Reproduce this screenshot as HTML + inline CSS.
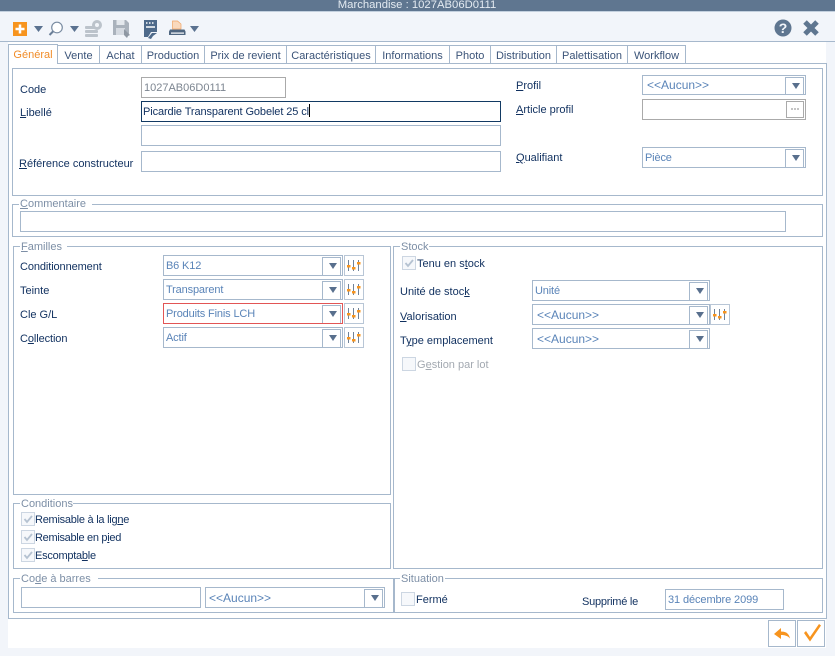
<!DOCTYPE html>
<html lang="fr"><head><meta charset="utf-8"><title>Marchandise</title>
<style>
*{box-sizing:border-box}
html,body{margin:0;padding:0;width:835px;height:656px;overflow:hidden;background:#f2f5fa;font-family:"Liberation Sans",sans-serif;font-size:11px;color:#10305f}
.a,.l,.i,.c,.b,.g,.t,.k,.lg,.sb{position:absolute}
.l{white-space:nowrap;line-height:14px;height:14px;margin-top:1px}
.i,.c{border:1px solid #a6b8cc;background:#fff;height:21px;color:#5a84b8;line-height:20px;padding-left:2px;white-space:nowrap;overflow:hidden;font-size:11px;letter-spacing:-.15px}
.c{line-height:21px}
.c.n{font-size:12px;letter-spacing:0;padding-left:4px;line-height:20px}
.c:after{content:"";position:absolute;right:1px;top:1px;width:17px;height:17px;border:1px solid #a6b8cc;background:#fff}
.c:before{content:"";position:absolute;z-index:1;right:5px;top:7px;border-left:4.500px solid transparent;border-right:4.500px solid transparent;border-top:6px solid #586f8d}
.g{border:1px solid #a6b8cc}
.lg{background:#fff;color:#7d8fa6;line-height:12px;height:13px;padding:0 0 0 1px;white-space:nowrap;margin-top:1px}
.t{top:45px;height:19px;border:1px solid #a6b8cc;border-left:0;background:#fff;text-align:center;line-height:20px;color:#3a5378;white-space:nowrap;font-size:11px}
.k{width:14px;height:14px;border:1px solid #ccd6e2;background:#f6f8fb}
.sb{width:20px;height:21px;border:1px solid #b8c6d6;background:#fff}
u{text-underline-offset:1px}
</style></head><body>
<div class="a" style="left:0;top:0;width:835px;height:11px;background:#5f7690;color:#e4ebf2;text-align:center;line-height:10px;font-size:11.300px;padding-right:1px">Marchandise : 1027AB06D0111</div>
<div class="a" style="left:0;top:11px;width:835px;height:1px;background:#c3d0de"></div>
<div class="a" style="left:0;top:41px;width:835px;height:1px;background:#a6b8cc"></div>
<div class="a" style="left:8px;top:42px;width:818px;height:606px;background:#fff"></div>

<!-- toolbar icons -->
<svg class="a" style="left:0;top:12px" width="835" height="29" viewBox="0 12 835 29">
<rect x="13" y="22" width="14" height="14" fill="#f7941e"/><path d="M20 24.500v9M15.500 29h9" stroke="#fff" stroke-width="2.500"/>
<path d="M34 26h9l-4.500 6z" fill="#5b7290"/>
<circle cx="57" cy="27.500" r="5.300" fill="#fff" stroke="#7a8ca2" stroke-width="1.200"/><path d="M53 31.500l-3.500 3.500" stroke="#6b7f98" stroke-width="2"/>
<path d="M70 26h9l-4.500 6z" fill="#5b7290"/>
<g fill="#bcc3cb"><rect x="85" y="26" width="13" height="3" rx="1"/><rect x="85" y="30" width="13" height="3" rx="1"/><rect x="85" y="34" width="13" height="3" rx="1"/><circle cx="97" cy="25" r="5"/></g><circle cx="97" cy="25" r="2" fill="#f2f5fa"/>
<path d="M113 20h13l3 3v12h-16z" fill="#aab2bc"/><rect x="116.500" y="20" width="8" height="5" fill="#e4e8ed"/><rect x="116" y="28" width="9" height="7" fill="#d5dae1"/><path d="M124 29l6 6-2 1-1 2-3-3z" fill="#8f98a3"/>
<path d="M144 20h13v12h-6l-3 5h-4z" fill="#4f6a8a"/><path d="M146 23h1.500M149 23h1.500M152 23h1.500M146 27h9" stroke="#fff" stroke-width="1.400"/><path d="M148 38l4-5h5l-4 3-2 3z" fill="#4f6a8a"/>
<path d="M172.500 21h5l3.500 3v5h-8.500z" fill="#f9d9bd" stroke="#f0a464" stroke-width=".7"/><path d="M170 29.500h14.500l1 2v3.500h-16.500v-3.500z" fill="#4f6680"/><rect x="171" y="32.500" width="13" height="1.200" fill="#fff"/>
<path d="M190 26h9l-4.500 6z" fill="#5b7290"/>
<circle cx="783" cy="28" r="8.500" fill="#5f7690"/><text x="783" y="33" text-anchor="middle" font-family="Liberation Sans" font-size="14" font-weight="700" fill="#f2f5fa">?</text>
<path d="M805 22l12 12M817 22l-12 12" stroke="#5f7690" stroke-width="5"/>
</svg>

<!-- tabs -->
<div class="t" style="left:8px;top:44px;width:50px;height:20px;border:1px solid #a6b8cc;border-bottom:0;color:#f08c28;z-index:3">Général</div>
<div class="t" style="left:58px;width:42px">Vente</div>
<div class="t" style="left:100px;width:42px">Achat</div>
<div class="t" style="left:142px;width:63px">Production</div>
<div class="t" style="left:205px;width:82px">Prix de revient</div>
<div class="t" style="left:287px;width:89px">Caractéristiques</div>
<div class="t" style="left:376px;width:74px">Informations</div>
<div class="t" style="left:450px;width:41px">Photo</div>
<div class="t" style="left:491px;width:66px">Distribution</div>
<div class="t" style="left:557px;width:71px">Palettisation</div>
<div class="t" style="left:628px;width:58px">Workflow</div>

<div class="g" style="left:8px;top:63px;width:819px;height:556px"></div>
<div class="a" style="left:9px;top:63px;width:48px;height:1px;background:#fff;z-index:4"></div>
<div class="g" style="left:12px;top:68px;width:811px;height:128px"></div>

<!-- top -->
<div class="l" style="left:20px;top:82px">Code</div>
<div class="i" style="left:141px;top:77px;width:145px;border-color:#aaa;color:#7c8590;letter-spacing:0">1027AB06D0111</div>
<div class="l" style="left:20px;top:105px"><u>L</u>ibellé</div>
<div class="i" style="left:141px;top:101px;width:360px;border-color:#123a63;color:#10305f;padding-left:1px;letter-spacing:-.1px;line-height:21px">Picardie Transparent Gobelet 25 cl<span style="display:inline-block;width:1px;height:13px;background:#000;vertical-align:-2px"></span></div>
<div class="i" style="left:141px;top:125px;width:360px"></div>
<div class="l" style="left:19px;top:156px"><u>R</u>éférence constructeur</div>
<div class="i" style="left:141px;top:151px;width:360px"></div>
<div class="l" style="left:516px;top:78px"><u>P</u>rofil</div>
<div class="c n" style="left:642px;top:75px;width:164px;height:20px;line-height:19px">&lt;&lt;Aucun&gt;&gt;</div>
<div class="l" style="left:516px;top:102px"><u>A</u>rticle profil</div>
<div class="i" style="left:642px;top:99px;width:164px;border-color:#aaa"></div>
<div class="a" style="left:786px;top:101px;width:18px;height:17px;border:1px solid #aaa;background:#fff"></div>
<div class="a" style="left:791px;top:108px;width:8px;height:2px;border-top:2px dotted #c4c4c4"></div>
<div class="l" style="left:516px;top:150px"><u>Q</u>ualifiant</div>
<div class="c" style="left:642px;top:147px;width:164px">Pièce</div>

<!-- commentaire -->
<div class="g" style="left:12px;top:204px;width:811px;height:33px"></div>
<div class="lg" style="left:19px;top:197px;width:73px"><u>C</u>ommentaire</div>
<div class="i" style="left:20px;top:211px;width:766px;z-index:1"></div>

<!-- familles -->
<div class="g" style="left:13px;top:246px;width:378px;height:249px"></div>
<div class="lg" style="left:20px;top:240px;width:47px"><u>F</u>amilles</div>
<div class="l" style="left:20px;top:259px;letter-spacing:-.1px">Conditionnement</div>
<div class="c" style="left:163px;top:255px;width:180px">B6 K12</div>
<div class="sb" style="left:344px;top:255px"></div>
<div class="l" style="left:20px;top:283px">Teinte</div>
<div class="c" style="left:163px;top:279px;width:180px">Transparent</div>
<div class="sb" style="left:344px;top:279px"></div>
<div class="l" style="left:20px;top:307px">Cle G/L</div>
<div class="c" style="left:163px;top:303px;width:180px;border-color:#e25555">Produits Finis LCH</div>
<div class="sb" style="left:344px;top:303px"></div>
<div class="l" style="left:20px;top:331px;letter-spacing:-.1px">C<u>o</u>llection</div>
<div class="c" style="left:163px;top:327px;width:180px">Actif</div>
<div class="sb" style="left:344px;top:327px"></div>

<!-- stock -->
<div class="g" style="left:393px;top:246px;width:430px;height:323px"></div>
<div class="lg" style="left:400px;top:240px;width:29px">Stock</div>
<div class="k" style="left:402px;top:256px"></div>
<div class="l" style="left:417px;top:256px">Tenu en s<u>t</u>ock</div>
<div class="l" style="left:400px;top:284px">Unité de stoc<u>k</u></div>
<div class="c" style="left:532px;top:280px;width:178px">Unité</div>
<div class="l" style="left:400px;top:309px"><u>V</u>alorisation</div>
<div class="c n" style="left:532px;top:304px;width:178px">&lt;&lt;Aucun&gt;&gt;</div>
<div class="sb" style="left:710px;top:304px"></div>
<div class="l" style="left:400px;top:333px">T<u>y</u>pe emplacement</div>
<div class="c n" style="left:532px;top:328px;width:178px">&lt;&lt;Aucun&gt;&gt;</div>
<div class="k" style="left:402px;top:357px"></div>
<div class="l" style="left:417px;top:357px;color:#a3a9b1">G<u>e</u>stion par lot</div>

<!-- conditions -->
<div class="g" style="left:13px;top:503px;width:378px;height:66px"></div>
<div class="lg" style="left:20px;top:497px;width:53px">Conditions</div>
<div class="k" style="left:21px;top:512px"></div>
<div class="l" style="left:35px;top:512px;letter-spacing:-.25px">Remisable à la lig<u>n</u>e</div>
<div class="k" style="left:21px;top:530px"></div>
<div class="l" style="left:35px;top:530px;letter-spacing:-.3px">Remisable en p<u>i</u>ed</div>
<div class="k" style="left:21px;top:548px"></div>
<div class="l" style="left:35px;top:548px;letter-spacing:-.25px">Escompta<u>b</u>le</div>

<!-- code barres -->
<div class="g" style="left:13px;top:578px;width:381px;height:35px"></div>
<div class="lg" style="left:20px;top:572px;width:78px">Co<u>d</u>e à barres</div>
<div class="i" style="left:21px;top:587px;width:180px"></div>
<div class="c n" style="left:205px;top:587px;width:180px;padding-left:3px">&lt;&lt;Aucun&gt;&gt;</div>

<!-- situation -->
<div class="g" style="left:393px;top:578px;width:430px;height:35px;border-left-width:2px"></div>
<div class="lg" style="left:400px;top:572px;width:45px">Situation</div>
<div class="k" style="left:401px;top:592px"></div>
<div class="l" style="left:416px;top:592px">Fermé</div>
<div class="l" style="left:582px;top:594px;letter-spacing:-.25px">Supprimé le</div>
<div class="i" style="left:665px;top:589px;width:119px;letter-spacing:-.1px">31 décembre 2099</div>

<!-- bottom buttons -->
<div class="g" style="left:768px;top:620px;width:28px;height:27px;background:#fff"></div>
<div class="g" style="left:797px;top:620px;width:28px;height:27px;background:#fff"></div>

<svg class="a" style="left:0;top:0;z-index:5" width="835" height="656" viewBox="0 0 835 656">
<defs><g id="s"><path d="M.5 0v11M5.500 0v11M10.500 0v11" stroke="#6f8299" stroke-width="1"/><rect x="-1" y="5" width="3.500" height="2.500" fill="#f7941e"/><rect x="4" y="7" width="3.500" height="2.500" fill="#f7941e"/><rect x="9" y="2" width="3.500" height="2.500" fill="#f7941e"/></g>
<path id="ck" d="M3.500 7l2.500 3 5-6" stroke="#b5c2d1" stroke-width="1.800" fill="none"/></defs>
<use href="#s" x="348" y="260"/><use href="#s" x="348" y="284"/><use href="#s" x="348" y="308"/><use href="#s" x="348" y="332"/><use href="#s" x="714" y="309"/>
<use href="#ck" x="402" y="256"/><use href="#ck" x="21" y="512"/><use href="#ck" x="21" y="530"/><use href="#ck" x="21" y="548"/>
<path d="M774 634l7-6v3.500c5 0 8 2 9 7-2-2.500-5-3.500-9-3.500v4z" fill="#f7941e"/>
<path d="M804 633l2-2 4 6 9-13 2 1.500-11 16z" fill="#f7941e"/>
</svg>
</body></html>
